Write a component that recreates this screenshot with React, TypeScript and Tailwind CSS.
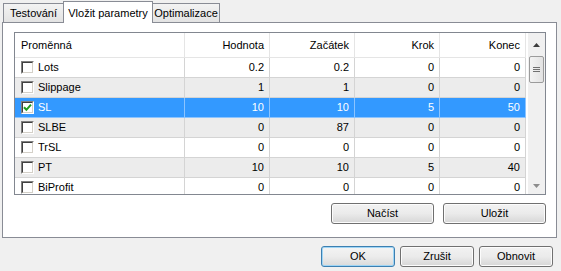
import React from 'react';

type Row = {
  name: string;
  value: string;
  start: string;
  step: string;
  end: string;
  checked?: boolean;
  selected?: boolean;
};

const rows: Row[] = [
  { name: 'Lots', value: '0.2', start: '0.2', step: '0', end: '0' },
  { name: 'Slippage', value: '1', start: '1', step: '0', end: '0' },
  { name: 'SL', value: '10', start: '10', step: '5', end: '50', checked: true, selected: true },
  { name: 'SLBE', value: '0', start: '87', step: '0', end: '0' },
  { name: 'TrSL', value: '0', start: '0', step: '0', end: '0' },
  { name: 'PT', value: '10', start: '10', step: '5', end: '40' },
  { name: 'BiProfit', value: '0', start: '0', step: '0', end: '0' },
];

const CheckBox = ({ checked }: { checked?: boolean }) => (
  <span className="flex h-[13px] w-[13px] shrink-0 border border-t-[#808080] border-l-[#808080] border-b-white border-r-white">
    <span className="flex flex-1 items-center justify-center border border-t-[#404040] border-l-[#404040] border-b-[#d4d0c8] border-r-[#d4d0c8] bg-white">
      {checked && (
        <svg width="9" height="9" viewBox="0 0 9 9">
          <path d="M1 4.2 L3.4 6.8 L8 1.6" fill="none" stroke="#1e9b1e" strokeWidth="2" />
        </svg>
      )}
    </span>
  </span>
);

const Button = ({ label, primary, className }: { label: string; primary?: boolean; className: string }) => (
  <button
    className={
      primary
        ? `h-[21px] rounded-[3px] border border-[#3c7fb1] bg-linear-to-b from-[#f4f4f4] via-[#ececec] to-[#dadada] text-black shadow-[inset_0_0_0_1px_#9fd5f5] ${className}`
        : `h-[21px] rounded-[3px] border border-[#707070] bg-linear-to-b from-[#f2f2f2] via-[#ebebeb] to-[#d6d6d6] text-black shadow-[inset_0_0_0_1px_#fcfcfc] ${className}`
    }
  >
    {label}
  </button>
);

export default function App() {
  return (
    <div className="h-[271px] w-[561px] overflow-hidden bg-[#f0f0f0] pl-[2px] font-['Liberation_Sans',Arial,sans-serif] text-[11px] text-black">
      {/* Tabs */}
      <div className="relative z-10 flex h-[23px] items-end pl-[1px]">
        <div className="mb-[1px] flex h-[19px] w-[60px] items-center justify-center border-t border-l border-[#898c95] bg-linear-to-b from-[#f3f3f3] to-[#e3e3e3]">
          Testování
        </div>
        <div className="flex h-[22px] w-[90px] items-start justify-center border-t border-l border-r border-[#898c95] bg-white pt-[3px]">
          Vložit parametry
        </div>
        <div className="mb-[1px] flex h-[19px] w-[67px] items-center justify-center border-t border-r border-[#898c95] bg-linear-to-b from-[#f3f3f3] to-[#e3e3e3]">
          Optimalizace
        </div>
      </div>

      {/* Panel */}
      <div className="-mt-px h-[216px] w-[555px] border border-[#898c95] bg-white pt-[9px] pl-[11px]">
        <div className="flex h-[163px] w-[532px] border border-[#828790] bg-white">
          <div className="flex w-[511px] flex-col">
            <div className="flex h-[25px] shrink-0 items-center border-b border-[#e5e5e5]">
              <div className="flex h-full w-[170px] items-center border-r border-[#e5e5e5] pl-[6px]">Proměnná</div>
              <div className="flex h-full w-[85px] items-center justify-end border-r border-[#e5e5e5] pr-[5px]">Hodnota</div>
              <div className="flex h-full w-[85px] items-center justify-end border-r border-[#e5e5e5] pr-[5px]">Začátek</div>
              <div className="flex h-full w-[85px] items-center justify-end border-r border-[#e5e5e5] pr-[5px]">Krok</div>
              <div className="flex h-full w-[86px] items-center justify-end border-r border-[#e5e5e5] pr-[5px]">Konec</div>
            </div>
            <div className="flex-1 overflow-hidden">
              {rows.map((r, i) => {
                const bg = r.selected ? 'bg-[#3399ff] text-white' : i % 2 === 1 ? 'bg-[#ececec]' : 'bg-white';
                const line = r.selected ? 'border-[#8cc4ff]' : 'border-[#d4d4d4]';
                return (
                  <div key={r.name} className={`flex h-[20px] shrink-0 border-b ${line} ${bg}`}>
                    <div className={`flex w-[170px] items-center gap-[4px] border-r ${line} pl-[6px]`}>
                      <CheckBox checked={r.checked} />
                      <span>{r.name}</span>
                    </div>
                    <div className={`flex w-[85px] items-center justify-end border-r ${line} pr-[5px]`}>{r.value}</div>
                    <div className={`flex w-[85px] items-center justify-end border-r ${line} pr-[5px]`}>{r.start}</div>
                    <div className={`flex w-[85px] items-center justify-end border-r ${line} pr-[5px]`}>{r.step}</div>
                    <div className={`flex w-[86px] items-center justify-end border-r ${line} pr-[5px]`}>{r.end}</div>
                  </div>
                );
              })}
            </div>
          </div>
          <div className="w-[2px]" />
          {/* Scrollbar */}
          <div className="flex w-[17px] flex-col bg-[#f0f0f0]">
            <div className="flex h-[23px] items-center justify-center">
              <svg width="7" height="4" viewBox="0 0 7 4">
                <path d="M0 4 L3.5 0 L7 4 Z" fill="#3c3c3c" />
              </svg>
            </div>
            <div className="mx-[1px] flex h-[27px] items-center justify-center rounded-[2px] border border-[#9b9b9b] bg-linear-to-r from-[#f3f3f3] to-[#e2e2e2]">
              <svg width="7" height="6" viewBox="0 0 7 6">
                <path d="M0 0.5 H7 M0 2.5 H7 M0 4.5 H7" stroke="#707070" strokeWidth="1" />
              </svg>
            </div>
            <div className="flex-1" />
            <div className="flex h-[17px] items-center justify-center">
              <svg width="7" height="4" viewBox="0 0 7 4">
                <path d="M0 0 L7 0 L3.5 4 Z" fill="#8c8c8c" />
              </svg>
            </div>
          </div>
        </div>
        <div className="mt-[8px] flex w-[532px] justify-end gap-[9px]">
          <Button label="Načíst" className="w-[103px]" />
          <Button label="Uložit" className="w-[103px]" />
        </div>
      </div>

      {/* Dialog buttons */}
      <div className="mt-[8px] flex w-[551px] justify-end gap-[5px]">
        <Button label="OK" primary className="w-[74px]" />
        <Button label="Zrušit" className="w-[74px]" />
        <Button label="Obnovit" className="w-[74px]" />
      </div>
    </div>
  );
}
